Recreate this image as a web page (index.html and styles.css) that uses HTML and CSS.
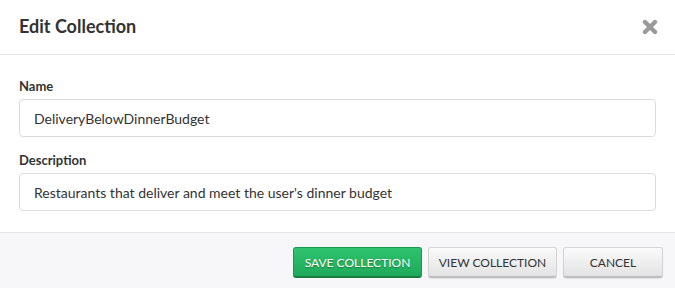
FILE: index.html
```html
<!DOCTYPE html>
<html>
<head>
<meta charset="utf-8">
<link rel="stylesheet" href="styles.css">
</head>
<body>
<div class="modal">
  <div class="modal-header">
    <h1 class="title">Edit Collection</h1>
    <button class="close" aria-label="Close">
      <svg width="16" height="16" viewBox="0 0 16 16"><path d="M3 3 L13 13 M13 3 L3 13" stroke="#9a9a9a" stroke-width="4.4" stroke-linecap="round"/></svg>
    </button>
  </div>
  <div class="modal-body">
    <div class="field">
      <label class="label">Name</label>
      <div class="input">DeliveryBelowDinnerBudget</div>
    </div>
    <div class="field">
      <label class="label">Description</label>
      <div class="input">Restaurants that deliver and meet the user's dinner budget</div>
    </div>
  </div>
  <div class="modal-footer">
    <button class="btn btn-primary">SAVE COLLECTION</button>
    <button class="btn btn-default btn-view">VIEW COLLECTION</button>
    <button class="btn btn-default btn-cancel">CANCEL</button>
  </div>
</div>
</body>
</html>
```
FILE: styles.css
```css
html, body {
  margin: 0;
  padding: 0;
  background: #fff;
}
body {
  font-family: Lato, "Liberation Sans", sans-serif;
  color: #333;
  width: 675px;
  height: 288px;
  overflow: hidden;
}
.modal {
  display: flex;
  flex-direction: column;
  height: 288px;
}
.modal-header {
  height: 55px;
  border-bottom: 1px solid #e5e5e5;
  display: flex;
  align-items: center;
  justify-content: space-between;
  padding: 0 17px 0 19px;
  box-sizing: border-box;
  flex: none;
}
.title {
  margin: 0;
  font-size: 18px;
  font-weight: 700;
  color: #333;
  padding-bottom: 2px;
}
.close {
  border: 0;
  background: none;
  padding: 0;
  margin-top: 0;
  display: flex;
  cursor: pointer;
}
.modal-body {
  padding: 23px 19px 0 19px;
  height: 177px;
  box-sizing: border-box;
  flex: none;
}
.field {
  display: flex;
  flex-direction: column;
}
.field + .field {
  margin-top: 15px;
}
.label {
  font-size: 13px;
  font-weight: 700;
  color: #333;
  line-height: 17px;
  margin-bottom: 4px;
}
.input {
  height: 38px;
  box-sizing: border-box;
  border: 1px solid #dcdcdc;
  border-radius: 4px;
  padding: 0 14px;
  display: flex;
  align-items: center;
  font-size: 14px;
  color: #333;
}
.modal-footer {
  flex: 1;
  background: #f7f7f9;
  border-top: 1px solid #e5e5e5;
  display: flex;
  justify-content: flex-end;
  align-items: flex-start;
  padding: 14px 12px 0 0;
  gap: 6px;
}
.btn {
  height: 31px;
  box-sizing: border-box;
  border-radius: 3px;
  font-family: Lato, "Liberation Sans", sans-serif;
  font-size: 12px;
  padding: 0;
  cursor: pointer;
}
.btn-primary {
  width: 129px;
  color: #fff;
  background: linear-gradient(#2fc36f, #1ea95a);
  border: 1px solid #1a9a50;
  border-bottom: 2px solid #157f41;
  text-shadow: 0 1px 1px rgba(0,0,0,0.3);
}
.btn-default {
  color: #333;
  background: linear-gradient(#fafafa, #e3e3e3);
  border: 1px solid #d4d4d4;
  border-bottom: 2px solid #bdbdbd;
  box-shadow: 0 1px 1px rgba(0,0,0,0.08);
}
.btn-view {
  width: 129px;
}
.btn-cancel {
  width: 100px;
}
```
